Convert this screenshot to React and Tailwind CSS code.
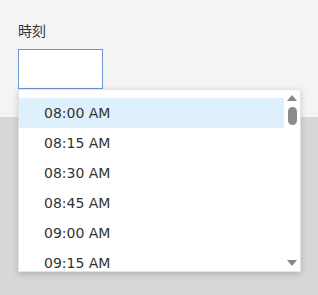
import React from 'react';

const times = ['08:00 AM', '08:15 AM', '08:30 AM', '08:45 AM', '09:00 AM', '09:15 AM'];

export default function App() {
  return (
    <div className="relative w-[318px] h-[295px] bg-[#d6d7d6] overflow-hidden" style={{ fontFamily: '"DejaVu Sans", sans-serif' }}>
      <div className="h-[117px] bg-[#f4f4f4] pt-[20px] pl-[18px]">
        <div className="text-[14px] leading-[20px] text-[#333]" style={{ fontFamily: '"Noto Sans CJK JP", sans-serif' }}>時刻</div>
        <div className="mt-[9px] w-[85px] h-[40px] bg-white border border-[#6b97d8]" />
      </div>

      {/* dropdown */}
      <div className="absolute left-[18px] top-[89px] w-[283px] h-[183px] bg-white border border-[#e4e4e4] shadow-[0_2px_6px_rgba(0,0,0,0.18)] flex">
        <div className="flex-1 overflow-hidden pt-[8px]">
          {times.map((t, i) => (
            <div
              key={t}
              className={`h-[30px] pl-[25px] flex items-center text-[14px] text-[#333] ${i === 0 ? 'bg-[#dff0fd]' : ''}`}
            >
              {t}
            </div>
          ))}
        </div>
        <div className="w-[16px] flex flex-col items-center pt-[5px] pb-[5px]">
          <div className="w-0 h-0 border-l-[5px] border-r-[5px] border-b-[6px] border-l-transparent border-r-transparent border-b-[#888]" />
          <div className="mt-[6px] w-[9px] h-[18px] rounded-full bg-[#8a8a8a]" />
          <div className="mt-auto w-0 h-0 border-l-[5px] border-r-[5px] border-t-[6px] border-l-transparent border-r-transparent border-t-[#888]" />
        </div>
      </div>
    </div>
  );
}
